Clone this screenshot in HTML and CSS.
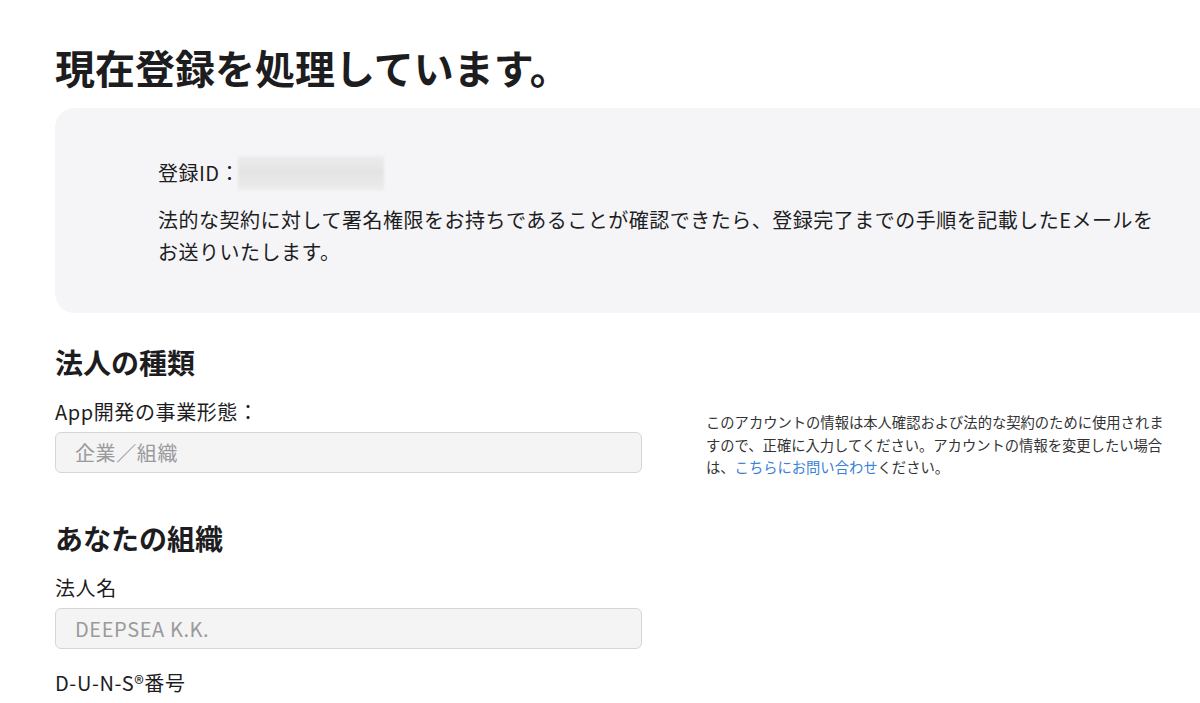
FILE: index.html
```html
<!DOCTYPE html>
<html lang="ja">
<head>
    <meta charset="UTF-8">
    <meta name="viewport" content="width=device-width, initial-scale=1.0">
    <title>登録の処理</title>
    <link rel="stylesheet" href="styles.css">
</head>
<body>
    <div class="page">
        <h1 class="page-title">現在登録を処理しています。</h1>

        <div class="status-box">
            <p class="enroll-id">登録ID：<span class="id-mask"></span></p>
            <p class="status-text">法的な契約に対して署名権限をお持ちであることが確認できたら、登録完了までの手順を記載したEメールをお送りいたします。</p>
        </div>

        <h2 class="section-title">法人の種類</h2>
        <div class="row">
            <div class="field">
                <label class="field-label">App開発の事業形態：</label>
                <div class="field-input">企業／組織</div>
            </div>
            <p class="note">このアカウントの情報は本人確認および法的な契約のために使用されますので、正確に入力してください。アカウントの情報を変更したい場合は、<a href="#" class="note-link">こちらにお問い合わせ</a>ください。</p>
        </div>

        <h2 class="section-title section-title-org">あなたの組織</h2>
        <div class="field">
            <label class="field-label">法人名</label>
            <div class="field-input">DEEPSEA K.K.</div>
        </div>
        <div class="field field-duns">
            <label class="field-label">D-U-N-S®番号</label>
        </div>
    </div>
</body>
</html>
```

FILE: styles.css
```css
* {
    margin: 0;
    padding: 0;
    box-sizing: border-box;
}

body {
    font-family: "Noto Sans CJK JP", sans-serif;
    background-color: #fff;
    color: #1d1d1f;
    overflow: hidden;
}

.page {
    padding: 43px 0 0 55px;
}

.page-title {
    font-size: 40px;
    line-height: 48px;
    font-weight: 700;
    margin-bottom: 17px;
}

.status-box {
    background: #f5f5f7;
    border-radius: 20px;
    margin-right: -40px;
    padding: 48px 40px 45px 103px;
    font-size: 20px;
    line-height: 32px;
    letter-spacing: 0.5px;
}

.enroll-id {
    display: flex;
    align-items: center;
    margin-bottom: 14px;
}

.id-mask {
    display: inline-block;
    width: 146px;
    height: 34px;
    margin-left: -2px;
    background: linear-gradient(180deg, #ececed 0%, #e4e4e5 50%, #ececed 100%);
    filter: blur(1px);
}

.status-text {
    max-width: 1004px;
}

.section-title {
    font-size: 28px;
    line-height: 36px;
    font-weight: 700;
    margin-top: 31px;
}

.section-title-org {
    margin-top: 41px;
}

.row {
    display: flex;
    align-items: flex-start;
    gap: 64px;
}

.field {
    width: 587px;
    margin-top: 18px;
}

.field-label {
    display: block;
    font-size: 20px;
    line-height: 28px;
    letter-spacing: 0.6px;
}

.field-input {
    margin-top: 6px;
    height: 41px;
    background: #f4f4f5;
    border: 1px solid #d6d6d9;
    border-radius: 6px;
    padding: 0 19px;
    font-size: 20px;
    line-height: 39px;
    letter-spacing: 0.6px;
    color: #9a9a9c;
}

.field-duns {
    margin-top: 20px;
}

.note {
    width: 465px;
    margin-top: 31px;
    font-size: 14.3px;
    line-height: 22.5px;
    color: #333;
}

.note-link {
    color: #3a82d6;
    text-decoration: none;
}
```
